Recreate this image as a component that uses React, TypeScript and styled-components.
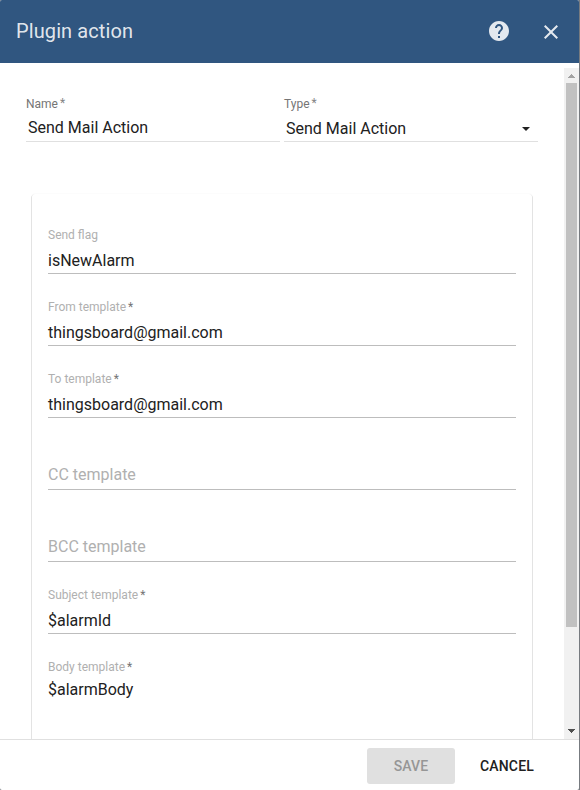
import React from 'react';
import styled, { createGlobalStyle } from 'styled-components';

const GlobalStyle = createGlobalStyle`
  * { box-sizing: border-box; }
  body {
    margin: 0;
    overflow: hidden;
    background: #777b80;
    font-family: Roboto, 'Liberation Sans', sans-serif;
    color: #212121;
  }
`;

const Dialog = styled.div`
  display: flex;
  flex-direction: column;
  width: 579px;
  height: 790px;
  background: #fff;
  border-radius: 2px;
  overflow: hidden;
`;

const Header = styled.header`
  display: flex;
  align-items: center;
  flex: none;
  height: 63px;
  padding: 0 16px;
  background: #305680;
  color: rgba(255, 255, 255, 0.87);
`;

const Title = styled.h2`
  flex: 1;
  margin: 0;
  padding-bottom: 2px;
  font-size: 20px;
  font-weight: 400;
  line-height: 24px;
  letter-spacing: 0.1px;
`;

const HeaderIcon = styled.svg`
  display: block;
  width: 24px;
  height: 24px;
  fill: currentColor;
  & + & { margin-left: 28px; }
`;

const HelpIcon = styled(HeaderIcon)`
  margin-bottom: 2px;
`;

const Body = styled.div`
  display: flex;
  flex: none;
  height: 676px;
  padding-top: 5px;
  overflow: hidden;
`;

const Content = styled.main`
  width: 564px;
  padding: 0 26px;
`;

const TopRow = styled.div`
  display: flex;
  gap: 4px;
  padding-top: 28px;
`;

const TopField = styled.div`
  display: flex;
  flex-direction: column;
  width: 254px;
  height: 46px;
  border-bottom: 1px solid #e0e0e0;
`;

const Label = styled.label<{ $dark?: boolean }>`
  display: flex;
  flex: none;
  height: 16px;
  font-size: 12px;
  line-height: 16px;
  color: ${(p) => (p.$dark ? '#757575' : '#b0b0b0')};
`;

const Star = styled.span<{ $dark?: boolean }>`
  margin: ${(p) => (p.$dark ? '-1px 0 0 2px' : '0 0 0 2px')};
  color: ${(p) => (p.$dark ? '#858585' : '#757575')};
`;

const TopValue = styled.div<{ $offset: number }>`
  display: flex;
  align-items: center;
  justify-content: space-between;
  height: 20px;
  margin-top: ${(p) => p.$offset}px;
  padding: 0 8px 0 2px;
  font-size: 16px;
  line-height: 20px;
`;

const Caret = styled.svg`
  display: block;
  width: 8px;
  height: 4px;
  margin-bottom: 1px;
  fill: #212121;
`;

const Card = styled.section`
  width: 500px;
  height: 580px;
  margin: 52px 0 0 6px;
  padding: 8px 16px;
  border-radius: 3px;
  box-shadow: 0 0 1px 0 rgba(0, 0, 0, 0.14), 1px 1px 0 0 #e6e6e6, -1px 1px 0 0 #e6e6e6;
`;

const Field = styled.div<{ $open?: boolean }>`
  display: flex;
  flex-direction: column;
  height: 72px;
  padding-top: 25px;
  border-bottom: ${(p) => (p.$open ? '0' : '1px solid #bdbdbd')};
`;

const Value = styled.div<{ $multi?: boolean }>`
  margin-top: ${(p) => (p.$multi ? 5 : 8)}px;
  font-size: 16px;
  line-height: 20px;
`;

const Placeholder = styled.div`
  margin-top: 22px;
  font-size: 16px;
  line-height: 20px;
  color: #b0b0b0;
`;

const Scrollbar = styled.div`
  display: flex;
  flex-direction: column;
  justify-content: space-between;
  width: 15px;
  height: 671px;
  background: #f1f1f1;
`;

const Arrow = styled.svg`
  display: block;
  flex: none;
  width: 15px;
  height: 15px;
`;

const Track = styled.div`
  flex: 1;
  padding: 0 2px;
`;

const Thumb = styled.div`
  height: 544px;
  background: #c1c1c1;
`;

const Footer = styled.footer`
  display: flex;
  justify-content: flex-end;
  align-items: flex-start;
  gap: 8px;
  flex: 1;
  padding: 8px 28px 0 0;
  border-top: 1px solid #e0e0e0;
`;

const Button = styled.button<{ $raised?: boolean }>`
  width: 88px;
  height: 36px;
  padding: 0;
  border: 0;
  border-radius: 3px;
  background: ${(p) => (p.$raised ? '#e0e0e0' : 'transparent')};
  color: ${(p) => (p.$raised ? '#969696' : '#212121')};
  font: 500 14px/36px Roboto, 'Liberation Sans', sans-serif;
  letter-spacing: 0.14px;
`;

type Entry = { label: string; value?: string; required?: boolean; multi?: boolean };

const entries: Entry[] = [
  { label: 'Send flag', value: 'isNewAlarm' },
  { label: 'From template', value: 'thingsboard@gmail.com', required: true },
  { label: 'To template', value: 'thingsboard@gmail.com', required: true },
  { label: 'CC template' },
  { label: 'BCC template' },
  { label: 'Subject template', value: '$alarmId', required: true },
  { label: 'Body template', value: '$alarmBody', required: true, multi: true },
];

export default function App() {
  return (
    <>
      <GlobalStyle />
      <Dialog>
        <Header>
          <Title>Plugin action</Title>
          <HelpIcon viewBox="0 0 24 24">
            <path d="M12 2C6.48 2 2 6.48 2 12s4.480 10 10 10 10-4.480 10-10S17.520 2 12 2zm1 17h-2v-2h2v2zm2.070-7.750l-.9.920C13.450 12.900 13 13.500 13 15h-2v-.5c0-1.100.45-2.100 1.170-2.830l1.240-1.260c.37-.36.590-.86.590-1.410 0-1.100-.9-2-2-2s-2 .9-2 2H8c0-2.210 1.790-4 4-4s4 1.790 4 4c0 .88-.36 1.680-.93 2.250z" />
          </HelpIcon>
          <HeaderIcon viewBox="0 0 24 24">
            <path d="M19 6.410L17.590 5 12 10.590 6.410 5 5 6.410 10.590 12 5 17.590 6.410 19 12 13.410 17.590 19 19 17.590 13.410 12z" />
          </HeaderIcon>
        </Header>
        <Body>
          <Content>
            <TopRow>
              <TopField>
                <Label $dark>Name<Star $dark>*</Star></Label>
                <TopValue $offset={6}>Send Mail Action</TopValue>
              </TopField>
              <TopField>
                <Label $dark>Type<Star $dark>*</Star></Label>
                <TopValue $offset={7}>
                  Send Mail Action
                  <Caret viewBox="0 0 8 4"><path d="M0 0h8L4 4z" /></Caret>
                </TopValue>
              </TopField>
            </TopRow>
            <Card>
              {entries.map((e) => (
                <Field key={e.label} $open={e.multi}>
                  {e.value ? (
                    <>
                      <Label>{e.label}{e.required && <Star>*</Star>}</Label>
                      <Value $multi={e.multi}>{e.value}</Value>
                    </>
                  ) : (
                    <Placeholder>{e.label}</Placeholder>
                  )}
                </Field>
              ))}
            </Card>
          </Content>
          <Scrollbar>
            <Arrow viewBox="0 0 15 15"><path d="M4 10h7V9h-1V8H9V7H8V6H7v1H6v1H5v1H4z" fill="#a3a3a3" /></Arrow>
            <Track><Thumb /></Track>
            <Arrow viewBox="0 0 15 15"><path d="M4 5h7v1h-1v1H9v1H8v1H7V8H6V7H5V6H4z" fill="#505050" /></Arrow>
          </Scrollbar>
        </Body>
        <Footer>
          <Button $raised disabled>SAVE</Button>
          <Button>CANCEL</Button>
        </Footer>
      </Dialog>
    </>
  );
}
